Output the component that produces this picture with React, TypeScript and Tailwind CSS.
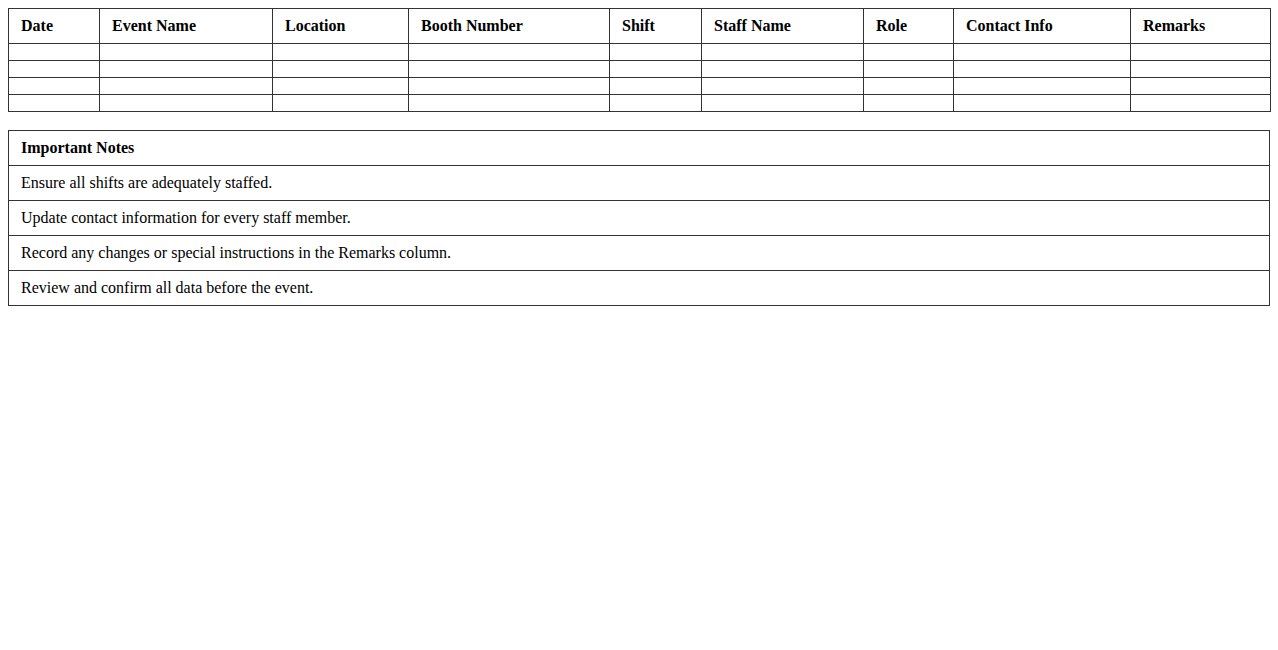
import React from "react";

const headers = ["Date", "Event Name", "Location", "Booth Number", "Shift", "Staff Name", "Role", "Contact Info", "Remarks"];
const widths = ["w-[91px]", "w-[173px]", "w-[136px]", "w-[201px]", "w-[92px]", "w-[162px]", "w-[90px]", "w-[177px]", "w-[140px]"];
const notes = [
  "Ensure all shifts are adequately staffed.",
  "Update contact information for every staff member.",
  "Record any changes or special instructions in the Remarks column.",
  "Review and confirm all data before the event.",
];

export default function App() {
  return (
    <div className="bg-white min-h-[650px] p-2 font-['Liberation_Serif',_'Times_New_Roman',_serif] text-[16px] text-black">
      <table className="w-full border-collapse table-fixed mb-[18px]">
        <colgroup>
          {widths.map((w, i) => (
            <col key={i} className={w} />
          ))}
        </colgroup>
        <thead>
          <tr>
            {headers.map((h) => (
              <th key={h} className="border border-[#333] px-3 py-2 text-left font-bold leading-[18px]">
                {h}
              </th>
            ))}
          </tr>
        </thead>
        <tbody>
          {[0, 1, 2, 3].map((r) => (
            <tr key={r}>
              {headers.map((h) => (
                <td key={h} className="border border-[#333] px-3 py-2 h-[17px]"></td>
              ))}
            </tr>
          ))}
        </tbody>
      </table>
      <table className="w-full border-collapse">
        <thead>
          <tr>
            <th className="border border-[#333] px-3 py-2 text-left font-bold leading-[18px]">Important Notes</th>
          </tr>
        </thead>
        <tbody>
          {notes.map((n) => (
            <tr key={n}>
              <td className="border border-[#333] px-3 py-2 leading-[18px]">{n}</td>
            </tr>
          ))}
        </tbody>
      </table>
    </div>
  );
}
